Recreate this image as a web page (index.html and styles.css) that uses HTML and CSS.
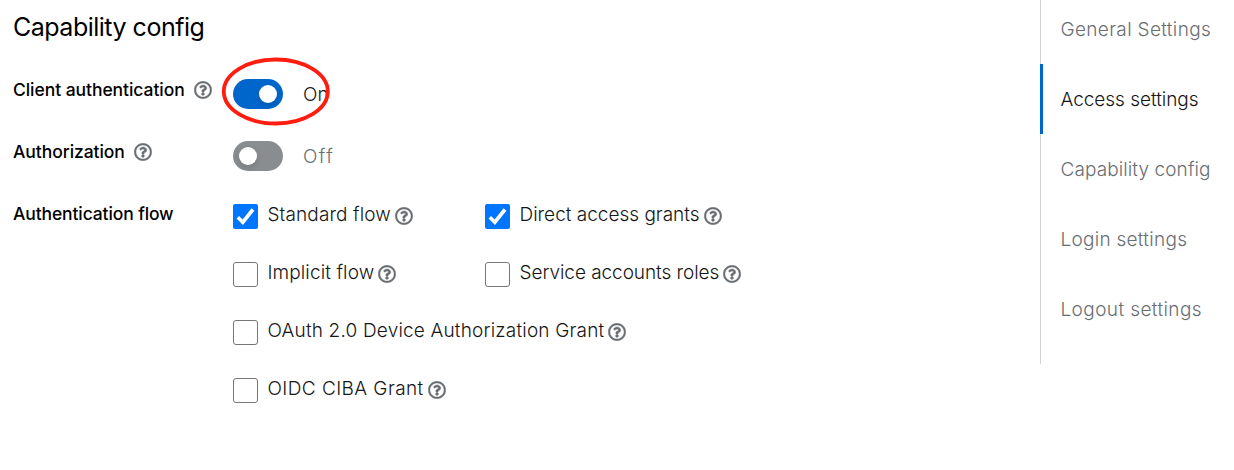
FILE: index.html
```html
<!DOCTYPE html>
<html lang="en">
<head>
<meta charset="utf-8">
<title>Capability config</title>
<link rel="stylesheet" href="styles.css">
</head>
<body>
<svg class="defs" aria-hidden="true">
  <symbol id="help" viewBox="0 0 512 512"><path d="M256 8C119 8 8 119.100 8 256c0 137 111 248 248 248s248-111 248-248C504 119.100 393 8 256 8zm0 448c-110.500 0-200-89.400-200-200 0-110.500 89.500-200 200-200s200 89.500 200 200c0 110.500-89.400 200-200 200zm107.200-255.200c0 67.100-72.400 68.100-72.400 92.900V300c0 6.600-5.400 12-12 12h-45.600c-6.600 0-12-5.400-12-12v-8.700c0-35.700 27.100-50 47.600-61.500 17.600-9.800 28.300-16.500 28.300-29.500 0-17.200-22-28.700-39.800-28.700-23.200 0-33.900 11-48.900 30-4.100 5.100-11.500 6.100-16.700 2.100l-27.800-21.100c-5.100-3.900-6.300-11-2.600-16.400C184.800 131.500 214.900 112 261.800 112c49 0 101.500 38.300 101.500 88.800zM298 368c0 23.200-18.800 42-42 42s-42-18.800-42-42 18.800-42 42-42 42 18.800 42 42z"/></symbol>
  <symbol id="check" viewBox="0 0 25 25"><path d="M4.800 13.300 L9.800 18.200 L20 5.500" fill="none" stroke="#fff" stroke-width="3.600"/></symbol>
</svg>
<div class="page">
  <main class="form">
    <h1 class="title"><span class="t-title">Capability config</span></h1>
    <div class="row">
      <div class="label"><span class="label-text t-client">Client authentication</span><svg class="help"><use href="#help"/></svg></div>
      <div class="control"><span class="switch on"><span class="knob"></span></span><span class="state state-on">On</span>
        <svg class="ring" viewBox="0 0 110 70"><ellipse cx="54.800" cy="34.500" rx="52" ry="32" fill="none" stroke="#ff1d10" stroke-width="3.800"/></svg>
      </div>
    </div>
    <div class="row">
      <div class="label"><span class="label-text t-authz">Authorization</span><svg class="help"><use href="#help"/></svg></div>
      <div class="control"><span class="switch"><span class="knob"></span></span><span class="state state-off">Off</span></div>
    </div>
    <div class="row flow-row">
      <div class="label"><span class="label-text t-flow">Authentication flow</span></div>
      <div class="options">
        <div class="option"><span class="box checked"><svg><use href="#check"/></svg></span><span class="text t-standard">Standard flow</span><svg class="help"><use href="#help"/></svg></div>
        <div class="option"><span class="box checked"><svg><use href="#check"/></svg></span><span class="text t-direct">Direct access grants</span><svg class="help"><use href="#help"/></svg></div>
        <div class="option"><span class="box"></span><span class="text t-implicit">Implicit flow</span><svg class="help"><use href="#help"/></svg></div>
        <div class="option"><span class="box"></span><span class="text t-service">Service accounts roles</span><svg class="help"><use href="#help"/></svg></div>
        <div class="option wide"><span class="box"></span><span class="text t-oauth">OAuth 2.0 Device Authorization Grant</span><svg class="help"><use href="#help"/></svg></div>
        <div class="option wide"><span class="box"></span><span class="text t-oidc">OIDC CIBA Grant</span><svg class="help"><use href="#help"/></svg></div>
      </div>
    </div>
  </main>
  <nav class="jump">
    <a class="link n-general">General Settings</a>
    <a class="link n-access current">Access settings</a>
    <a class="link n-capability">Capability config</a>
    <a class="link n-login">Login settings</a>
    <a class="link n-logout">Logout settings</a>
  </nav>
</div>
</body>
</html>
```
FILE: styles.css
```css
* { box-sizing: border-box; }
body { margin: 0; background: #fff; color: #151515; font: 300 19px/30px Inter, sans-serif; white-space: nowrap; }
.defs { position: absolute; width: 0; height: 0; }
.page { display: flex; height: 470px; overflow: hidden; }
.form { width: 1040px; padding: 12px 0 0 13px; }
.title { margin: 0 0 32px; height: 30px; font-size: 25px; line-height: 31px; font-weight: 400; color: #000; letter-spacing: -.5px; }
.row { display: flex; height: 62px; }
.label { display: flex; width: 220px; height: 32px; align-items: center; font-size: 17.500px; font-weight: 500; color: #000; letter-spacing: -.06px; }
.t-flow { letter-spacing: -.12px; }
.help { flex: none; width: 18px; height: 18px; fill: #6a6e73; stroke: #6a6e73; stroke-width: 12px; overflow: visible; }
.label .help { margin-left: 9px; }
.control { position: relative; display: flex; height: 30px; margin-top: 5px; align-items: center; }
.switch { display: flex; width: 50px; height: 30px; padding: 6px; border-radius: 15px; background: #8a8d90; }
.switch.on { justify-content: flex-end; padding-right: 6.500px; background: #06c; }
.knob { width: 18px; height: 18px; border-radius: 50%; background: #fff; box-shadow: 0 3px 6px rgba(0,0,0,.12); }
.state { margin: 2px 0 0 20px; color: #6a6e73; }
.state-on { color: #151515; }
.state-off { letter-spacing: 1.400px; }
.ring { position: absolute; left: -12px; top: -22px; width: 110px; height: 70px; }
.options { display: grid; grid-template-columns: 252px 300px; grid-auto-rows: 58px; }
.option { display: flex; align-items: flex-start; height: 32px; }
.wide { grid-column: 1 / -1; }
.box { flex: none; width: 25px; height: 25px; margin: 6px 9.500px 0 0; border: 1.500px solid #767676; border-radius: 3px; }
.box.checked { border: 0; border-radius: 2px; background: #0075ff; }
.box svg { display: block; width: 25px; height: 25px; }
.option .text { margin-top: 2px; }
.option .help { margin: 9px 0 0 4px; }
.t-standard { letter-spacing: .11px; }
.t-implicit { letter-spacing: .11px; }
.t-service { letter-spacing: -.06px; }
.t-oauth { letter-spacing: .18px; }
.t-oidc { letter-spacing: .43px; }
.jump { width: 194px; height: 364px; border-left: 1px solid #d2d2d2; }
.link { display: block; height: 70px; padding: 15px 0 0 19.500px; color: #6a6e73; }
.link:first-child { height: 64px; }
.link.current { margin-left: -1px; padding-left: 17.500px; padding-top: 21px; border-left: 3px solid #06c; color: #151515; }
.link:nth-child(n+3) { padding-top: 21px; }
.n-general { letter-spacing: .34px; }
.n-access { letter-spacing: -.03px; }
.n-capability { letter-spacing: .09px; }
.n-login { letter-spacing: .27px; }
.n-logout { letter-spacing: .4px; }
```
